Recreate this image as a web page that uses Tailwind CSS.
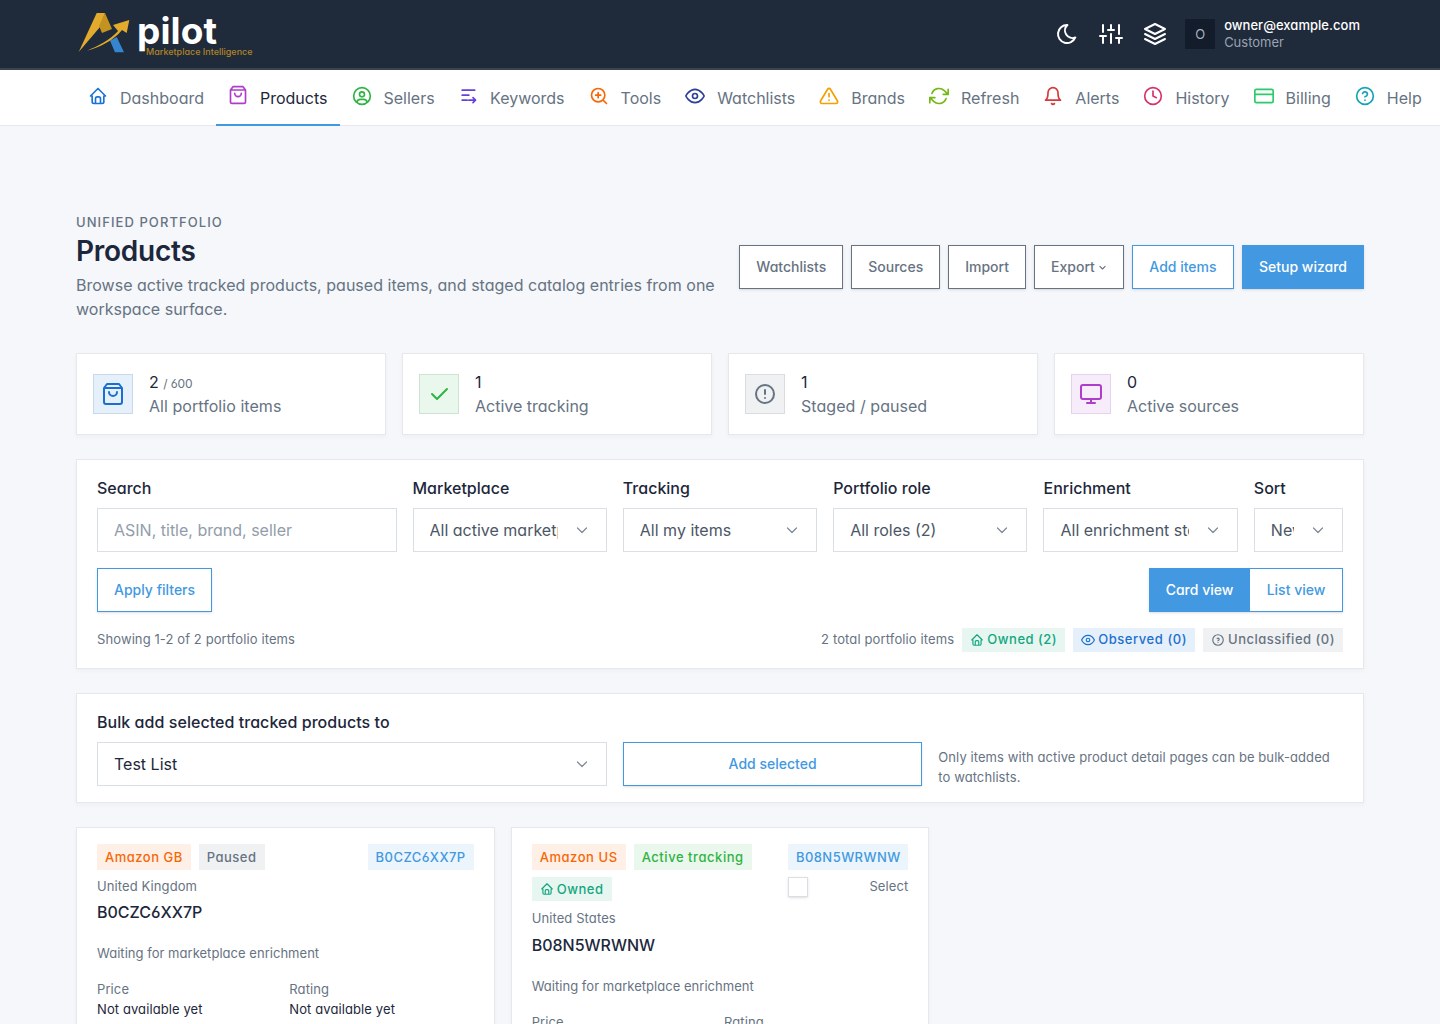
<!DOCTYPE html>
<html lang="en">
<head>
  <meta charset="UTF-8">
  <meta name="viewport" content="width=device-width, initial-scale=1.0">
  <title>Products - pilot</title>
  <script src="https://cdn.jsdelivr.net/npm/@tailwindcss/browser@4"></script>
</head>
<body class="font-['Inter',sans-serif] [font-feature-settings:'cv03','cv04','cv11'] bg-[#f5f7fb] text-[#1d273b] text-sm">
<div class="h-[1024px] overflow-hidden">

  <!-- top bar -->
  <header class="h-[70px] bg-[#1f2a3b] border-b-2 border-[#3a4350] flex items-center justify-between pl-[78px] pr-[80px]">
    <div class="flex items-start">
      <svg class="w-[54px] h-[42px] mt-[1px]" viewBox="0 0 54 42">
        <polygon points="0.7,40 18.7,1 27,1 22,15" fill="#e3ab2d"/>
        <polygon points="27,1 34,17 24,21 21,14" fill="#c4921f"/>
        <polygon points="32,28.7 38.7,25 46,40.3 37,40.3" fill="#3585d0"/>
        <path d="M9 38.7C20 34 32 28 40 19L35 13L51.3 8L48.7 21L44 18C35 29 22 35 9 38.7Z" fill="#e3ab2d"/>
      </svg>
      <div class="ml-[5px] flex flex-col">
        <span class="mt-[1px] text-[37px] leading-[38px] font-bold text-white tracking-[0.1px]">pilot</span>
        <span class="ml-[9px] mt-[-4px] text-[9px] leading-[12px] font-medium text-[#b08428] whitespace-nowrap">Marketplace Intelligence</span>
      </div>
    </div>
    <div class="flex items-center">
      <svg class="w-6 h-6 text-white" viewBox="0 0 24 24" fill="none" stroke="currentColor" stroke-width="2" stroke-linecap="round" stroke-linejoin="round"><path d="M12 3c.132 0 .263 0 .393 0a7.5 7.5 0 0 0 7.92 12.446a9 9 0 1 1 -8.313 -12.454z"/></svg>
      <svg class="w-6 h-6 ml-[20px] text-white" viewBox="0 0 24 24" fill="none" stroke="currentColor" stroke-width="2" stroke-linecap="round" stroke-linejoin="round"><path d="M4 21v-7M4 10V3M12 21v-9M12 8V3M20 21v-5M20 12V3M1 14h6M9 8h6M17 16h6"/></svg>
      <svg class="w-6 h-6 ml-[20px] text-white" viewBox="0 0 24 24" fill="none" stroke="currentColor" stroke-width="2" stroke-linecap="round" stroke-linejoin="round"><path d="M12 2 2 7l10 5 10-5-10-5ZM2 17l10 5 10-5M2 12l10 5 10-5"/></svg>
      <div class="ml-[18px] w-[30px] h-[30px] bg-[#131c2b] text-[#a8b0bb] text-[13px] flex items-center justify-center">O</div>
      <div class="ml-[9px] leading-[17px] text-[13px]">
        <div class="text-white font-medium tracking-[0.03px]">owner@example.com</div>
        <div class="text-[#9aa4b2]">Customer</div>
      </div>
    </div>
  </header>

  <!-- main nav -->
  <nav class="h-[56px] bg-white border-b border-[#e6e8eb] flex pl-[76px] text-base text-[#667382] whitespace-nowrap">
    <a class="flex items-center px-3 gap-3 shrink-0 h-[56px]">
      <svg class="w-5 h-5 text-[#1b74d4] mt-[-4px]" viewBox="0 0 24 24" fill="none" stroke="currentColor" stroke-width="2" stroke-linecap="round" stroke-linejoin="round"><path d="M5 12H3l9-9 9 9h-2M5 12v7a2 2 0 0 0 2 2h10a2 2 0 0 0 2-2v-7M9 21v-6a2 2 0 0 1 2-2h2a2 2 0 0 1 2 2v6"/></svg>Dashboard</a>
    <a class="flex items-center px-3 pt-[2px] gap-3 shrink-0 h-[56px] text-[#1d273b] border-b-2 border-[#4299e1]">
      <svg class="w-5 h-5 text-[#ae3ec9] mt-[-6px]" viewBox="0 0 24 24" fill="none" stroke="currentColor" stroke-width="2" stroke-linecap="round" stroke-linejoin="round"><path d="M6 2 3 6v14a2 2 0 0 0 2 2h14a2 2 0 0 0 2-2V6l-3-4ZM3 6h18M16 10a4 4 0 0 1-8 0"/></svg>Products</a>
    <a class="flex items-center pl-3 pr-[11.4px] gap-3 shrink-0 h-[56px]">
      <svg class="w-5 h-5 text-[#2fb344] mt-[-4px]" viewBox="0 0 24 24" fill="none" stroke="currentColor" stroke-width="2" stroke-linecap="round" stroke-linejoin="round"><path d="M2 12a10 10 0 1 0 20 0a10 10 0 1 0-20 0M9 10a3 3 0 1 0 6 0a3 3 0 1 0-6 0M6 19.5a4 4 0 0 1 4-3.5h4a4 4 0 0 1 4 3.5"/></svg>Sellers</a>
    <a class="flex items-center px-3 gap-3 shrink-0 h-[56px]">
      <svg class="w-5 h-5 text-[#6741d9] mt-[-4px]" viewBox="0 0 24 24" fill="none" stroke="currentColor" stroke-width="2" stroke-linecap="round" stroke-linejoin="round"><path d="M5 5h15M5 11h8M5 17h6M13 17h8M18 14l3 3-3 3"/></svg>Keywords</a>
    <a class="flex items-center px-3 gap-3 shrink-0 h-[56px]">
      <svg class="w-5 h-5 text-[#f76707] mt-[-4px]" viewBox="0 0 24 24" fill="none" stroke="currentColor" stroke-width="2" stroke-linecap="round" stroke-linejoin="round"><path d="M3 11a8 8 0 1 0 16 0a8 8 0 1 0-16 0M21 21l-4.35-4.35M11 8v6M8 11h6"/></svg>Tools</a>
    <a class="flex items-center px-3 gap-3 shrink-0 h-[56px]">
      <svg class="w-5 h-5 text-[#2d3f97] mt-[-4px]" viewBox="0 0 24 24" fill="none" stroke="currentColor" stroke-width="2" stroke-linecap="round" stroke-linejoin="round"><path d="M1 12s4-8 11-8 11 8 11 8-4 8-11 8-11-8-11-8zM9 12a3 3 0 1 0 6 0a3 3 0 1 0-6 0"/></svg>Watchlists</a>
    <a class="flex items-center px-3 gap-3 shrink-0 h-[56px]">
      <svg class="w-5 h-5 text-[#f59f00] mt-[-4px]" viewBox="0 0 24 24" fill="none" stroke="currentColor" stroke-width="2" stroke-linecap="round" stroke-linejoin="round"><path d="M10.29 3.86L1.82 18a2 2 0 0 0 1.71 3h16.94a2 2 0 0 0 1.71-3L13.71 3.86a2 2 0 0 0-3.42 0zM12 9v4M12 17h.01"/></svg>Brands</a>
    <a class="flex items-center px-3 gap-3 shrink-0 h-[56px]">
      <svg class="w-5 h-5 text-[#74b816] mt-[-4px]" viewBox="0 0 24 24" fill="none" stroke="currentColor" stroke-width="2" stroke-linecap="round" stroke-linejoin="round"><path d="M23 4v6h-6M1 20v-6h6M3.51 9a9 9 0 0 1 14.85-3.36L23 10M1 14l4.64 4.36A9 9 0 0 0 20.49 15"/></svg>Refresh</a>
    <a class="flex items-center px-3 gap-3 shrink-0 h-[56px]">
      <svg class="w-5 h-5 text-[#d63939] mt-[-4px]" viewBox="0 0 24 24" fill="none" stroke="currentColor" stroke-width="2" stroke-linecap="round" stroke-linejoin="round"><path d="M18 8A6 6 0 0 0 6 8c0 7-3 9-3 9h18s-3-2-3-9M13.73 21a2 2 0 0 1-3.46 0"/></svg>Alerts</a>
    <a class="flex items-center px-3 gap-3 shrink-0 h-[56px]">
      <svg class="w-5 h-5 text-[#d6336c] mt-[-4px]" viewBox="0 0 24 24" fill="none" stroke="currentColor" stroke-width="2" stroke-linecap="round" stroke-linejoin="round"><path d="M2 12a10 10 0 1 0 20 0a10 10 0 1 0-20 0M12 6v6l4 2"/></svg>History</a>
    <a class="flex items-center px-3 gap-3 shrink-0 h-[56px]">
      <svg class="w-5 h-5 text-[#2bcb6b] mt-[-4px]" viewBox="0 0 24 24" fill="none" stroke="currentColor" stroke-width="2" stroke-linecap="round" stroke-linejoin="round"><path d="M3 4h18a2 2 0 0 1 2 2v12a2 2 0 0 1-2 2H3a2 2 0 0 1-2-2V6a2 2 0 0 1 2-2ZM1 10h22"/></svg>Billing</a>
    <a class="flex items-center px-3 gap-3 shrink-0 h-[56px]">
      <svg class="w-5 h-5 text-[#17a2b8] mt-[-4px]" viewBox="0 0 24 24" fill="none" stroke="currentColor" stroke-width="2" stroke-linecap="round" stroke-linejoin="round"><path d="M2 12a10 10 0 1 0 20 0a10 10 0 1 0-20 0M9.09 9a3 3 0 0 1 5.83 1c0 2-3 3-3 3M12 17h.01"/></svg>Help</a>
  </nav>

  <main class="px-[76px]">
    <!-- page title -->
    <div class="pt-[87px] flex justify-between items-center">
      <div class="w-[650px]">
        <div class="text-[13px] leading-[18px] font-medium tracking-[1.07px] text-[#667382]">UNIFIED PORTFOLIO</div>
        <h1 class="text-[28px] leading-[36px] font-semibold tracking-[-0.25px] mt-[2px]">Products</h1>
        <p class="text-base leading-6 tracking-[0.02px] text-[#667382] mt-[4px]">Browse active tracked products, paused items, and staged catalog entries from one workspace surface.</p>
      </div>
      <div class="flex gap-2 font-medium">
        <button class="h-11 px-4 bg-white border border-[#667382] text-[#667382] shadow-sm">Watchlists</button>
        <button class="h-11 px-4 bg-white border border-[#667382] text-[#667382] shadow-sm">Sources</button>
        <button class="h-11 px-4 bg-white border border-[#667382] text-[#667382] shadow-sm">Import</button>
        <button class="h-11 w-[90px] justify-center bg-white border border-[#667382] text-[#667382] shadow-sm flex items-center gap-[3px]">Export
          <svg class="w-[9px] h-[9px]" viewBox="0 0 24 24" fill="none" stroke="currentColor" stroke-width="3" stroke-linecap="round" stroke-linejoin="round"><path d="M5 9l7 7 7-7"/></svg></button>
        <button class="h-11 w-[102px] bg-white border border-[#4299e1] text-[#4299e1] shadow-sm">Add items</button>
        <button class="h-11 px-4 bg-[#4299e1] border border-[#4299e1] text-white shadow-sm">Setup wizard</button>
      </div>
    </div>

    <!-- stat cards -->
    <div class="grid grid-cols-4 gap-4 mt-[32px]">
      <div class="h-[82px] bg-white border border-[#e6e8eb] shadow-[0_2px_4px_rgba(30,41,59,0.04)] flex items-center pl-4 gap-4">
        <div class="w-10 h-10 flex items-center justify-center bg-[#e6f0fa] border border-[#c8d9ec] text-[#1b6fd0]">
          <svg class="w-6 h-6" viewBox="0 0 24 24" fill="none" stroke="currentColor" stroke-width="2" stroke-linecap="round" stroke-linejoin="round"><path d="M6 2 3 6v14a2 2 0 0 0 2 2h14a2 2 0 0 0 2-2V6l-3-4ZM3 6h18M16 10a4 4 0 0 1-8 0"/></svg>
        </div>
        <div class="text-base leading-6 tracking-[0.05px]"><div>2 <span class="text-xs text-[#667382] tracking-[-0.15px]">/ 600</span></div><div class="text-[#667382]">All portfolio items</div></div>
      </div>
      <div class="h-[82px] bg-white border border-[#e6e8eb] shadow-[0_2px_4px_rgba(30,41,59,0.04)] flex items-center pl-4 gap-4">
        <div class="w-10 h-10 flex items-center justify-center bg-[#eaf7ec] border border-[#cfe3d4] text-[#2fb344]">
          <svg class="w-6 h-6" viewBox="0 0 24 24" fill="none" stroke="currentColor" stroke-width="2" stroke-linecap="round" stroke-linejoin="round"><path d="M5 12l5 5L20 7"/></svg>
        </div>
        <div class="text-base leading-6"><div>1</div><div class="text-[#667382]">Active tracking</div></div>
      </div>
      <div class="h-[82px] bg-white border border-[#e6e8eb] shadow-[0_2px_4px_rgba(30,41,59,0.04)] flex items-center pl-4 gap-4">
        <div class="w-10 h-10 flex items-center justify-center bg-[#f0f1f3] border border-[#d9dce1] text-[#667382]">
          <svg class="w-6 h-6" viewBox="0 0 24 24" fill="none" stroke="currentColor" stroke-width="2" stroke-linecap="round" stroke-linejoin="round"><path d="M3 12a9 9 0 1 0 18 0a9 9 0 0 0-18 0M12 8v4M12 16h.01"/></svg>
        </div>
        <div class="text-base leading-6 tracking-[0.05px]"><div>1</div><div class="text-[#667382]">Staged / paused</div></div>
      </div>
      <div class="h-[82px] bg-white border border-[#e6e8eb] shadow-[0_2px_4px_rgba(30,41,59,0.04)] flex items-center pl-4 gap-4">
        <div class="w-10 h-10 flex items-center justify-center bg-[#f7ecfa] border border-[#e4d3ea] text-[#ae3ec9]">
          <svg class="w-6 h-6" viewBox="0 0 24 24" fill="none" stroke="currentColor" stroke-width="2" stroke-linecap="round" stroke-linejoin="round"><path d="M4 3h16a2 2 0 0 1 2 2v10a2 2 0 0 1-2 2H4a2 2 0 0 1-2-2V5a2 2 0 0 1 2-2ZM8 21h8M12 17v4"/></svg>
        </div>
        <div class="text-base leading-6"><div>0</div><div class="text-[#667382]">Active sources</div></div>
      </div>
    </div>

    <!-- filters -->
    <section class="mt-[24px] h-[210px] bg-white border border-[#e6e8eb] shadow-[0_2px_4px_rgba(30,41,59,0.04)] px-5 pt-4">
      <div class="grid grid-cols-12 gap-4 text-base">
        <label class="col-span-3 block"><span class="block font-medium leading-6 mb-2">Search</span>
          <input class="w-full h-11 px-4 bg-white border border-[#dadfe5] placeholder:text-[#929dab]" placeholder="ASIN, title, brand, seller"></label>
        <label class="col-span-2 block"><span class="block font-medium leading-6 mb-2">Marketplace</span>
          <span class="relative block"><select class="appearance-none w-full h-11 pl-4 pr-12 bg-white border border-[#dadfe5] text-[#4b5666]"><option>All active marketplaces</option></select>
          <svg class="absolute right-[17px] top-[14px] w-4 h-4 text-[#7d8896] pointer-events-none" viewBox="0 0 16 16" fill="none" stroke="currentColor" stroke-width="1.2" stroke-linecap="round" stroke-linejoin="round"><path d="M3.5 6l4.5 4.5 4.5-4.5"/></svg></span></label>
        <label class="col-span-2 block"><span class="block font-medium leading-6 mb-2">Tracking</span>
          <span class="relative block"><select class="appearance-none w-full h-11 pl-4 pr-12 bg-white border border-[#dadfe5] text-[#4b5666]"><option>All my items</option></select>
          <svg class="absolute right-[17px] top-[14px] w-4 h-4 text-[#7d8896] pointer-events-none" viewBox="0 0 16 16" fill="none" stroke="currentColor" stroke-width="1.2" stroke-linecap="round" stroke-linejoin="round"><path d="M3.5 6l4.5 4.5 4.5-4.5"/></svg></span></label>
        <label class="col-span-2 block"><span class="block font-medium leading-6 mb-2">Portfolio role</span>
          <span class="relative block"><select class="appearance-none w-full h-11 pl-4 pr-12 bg-white border border-[#dadfe5] text-[#4b5666]"><option>All roles (2)</option></select>
          <svg class="absolute right-[17px] top-[14px] w-4 h-4 text-[#7d8896] pointer-events-none" viewBox="0 0 16 16" fill="none" stroke="currentColor" stroke-width="1.2" stroke-linecap="round" stroke-linejoin="round"><path d="M3.5 6l4.5 4.5 4.5-4.5"/></svg></span></label>
        <label class="col-span-2 block"><span class="block font-medium leading-6 mb-2">Enrichment</span>
          <span class="relative block"><select class="appearance-none w-full h-11 pl-4 pr-12 bg-white border border-[#dadfe5] text-[#4b5666]"><option>All enrichment states</option></select>
          <svg class="absolute right-[17px] top-[14px] w-4 h-4 text-[#7d8896] pointer-events-none" viewBox="0 0 16 16" fill="none" stroke="currentColor" stroke-width="1.2" stroke-linecap="round" stroke-linejoin="round"><path d="M3.5 6l4.5 4.5 4.5-4.5"/></svg></span></label>
        <label class="col-span-1 block"><span class="block font-medium leading-6 mb-2">Sort</span>
          <span class="relative block"><select class="appearance-none w-full h-11 pl-4 pr-12 bg-white border border-[#dadfe5] text-[#4b5666]"><option>Newest</option></select>
          <svg class="absolute right-[17px] top-[14px] w-4 h-4 text-[#7d8896] pointer-events-none" viewBox="0 0 16 16" fill="none" stroke="currentColor" stroke-width="1.2" stroke-linecap="round" stroke-linejoin="round"><path d="M3.5 6l4.5 4.5 4.5-4.5"/></svg></span></label>
      </div>
      <div class="flex justify-between mt-4 font-medium">
        <button class="h-11 px-4 border border-[#4299e1] text-[#4299e1] shadow-sm">Apply filters</button>
        <div class="flex shadow-sm">
          <button class="h-11 w-[101px] bg-[#4299e1] border border-[#4299e1] text-white">Card view</button>
          <button class="h-11 w-[93px] border border-[#4299e1] border-l-0 text-[#4299e1]">List view</button>
        </div>
      </div>
      <div class="flex justify-between items-center mt-4 text-[13px] tracking-[0.1px] text-[#667382]">
        <span class="mb-[2px]">Showing 1-2 of 2 portfolio items</span>
        <div class="flex items-center gap-2">
          <span class="mb-[2px] tracking-[0.13px]">2 total portfolio items</span>
          <span class="h-6 px-2 pb-[2px] flex items-center gap-[3px] bg-[#e7f6f1] text-[#13a67f] font-medium tracking-[0.5px]">
            <svg class="w-[14px] h-[14px] mt-[2px]" viewBox="0 0 24 24" fill="none" stroke="currentColor" stroke-width="2" stroke-linecap="round" stroke-linejoin="round"><path d="M5 12H3l9-9 9 9h-2M5 12v7a2 2 0 0 0 2 2h10a2 2 0 0 0 2-2v-7M9 21v-6a2 2 0 0 1 2-2h2a2 2 0 0 1 2 2v6"/></svg>Owned (2)</span>
          <span class="h-6 px-2 pb-[2px] flex items-center gap-[3px] bg-[#e6f0fa] text-[#1b6fd0] font-medium tracking-[0.56px]">
            <svg class="w-[14px] h-[14px] mt-[2px]" viewBox="0 0 24 24" fill="none" stroke="currentColor" stroke-width="2" stroke-linecap="round" stroke-linejoin="round"><path d="M1 12s4-8 11-8 11 8 11 8-4 8-11 8-11-8-11-8zM9 12a3 3 0 1 0 6 0a3 3 0 1 0-6 0"/></svg>Observed (0)</span>
          <span class="h-6 px-2 pb-[2px] flex items-center gap-[3px] bg-[#f0f1f3] text-[#667382] font-medium tracking-[0.5px]">
            <svg class="w-[14px] h-[14px] mt-[2px]" viewBox="0 0 24 24" fill="none" stroke="currentColor" stroke-width="2" stroke-linecap="round" stroke-linejoin="round"><path d="M3 12a9 9 0 1 0 18 0a9 9 0 1 0-18 0M12 16v.01M12 13a2 2 0 0 0 .914-3.782a1.98 1.98 0 0 0-2.414.483"/></svg>Unclassified (0)</span>
        </div>
      </div>
    </section>

    <!-- bulk add -->
    <section class="mt-[24px] h-[110px] bg-white border border-[#e6e8eb] shadow-[0_2px_4px_rgba(30,41,59,0.04)] px-5 pt-4">
      <div class="text-base font-medium leading-6 tracking-[0.05px] mb-2">Bulk add selected tracked products to</div>
      <div class="grid grid-cols-12 gap-4 items-start">
        <div class="col-span-5 relative">
          <select class="appearance-none w-full h-11 pl-4 pr-12 bg-white border border-[#dadfe5] text-base"><option>Test List</option></select>
          <svg class="absolute right-[17px] top-[14px] w-4 h-4 text-[#7d8896] pointer-events-none" viewBox="0 0 16 16" fill="none" stroke="currentColor" stroke-width="1.2" stroke-linecap="round" stroke-linejoin="round"><path d="M3.5 6l4.5 4.5 4.5-4.5"/></svg>
        </div>
        <button class="col-span-3 h-11 border border-[#4299e1] text-[#4299e1] font-medium shadow-sm">Add selected</button>
        <p class="col-span-4 mt-[5px] text-[13px] leading-5 tracking-[0.08px] text-[#667382]">Only items with active product detail pages can be bulk-added to watchlists.</p>
      </div>
    </section>

    <!-- product cards -->
    <div class="grid grid-cols-3 gap-4 mt-[24px] items-start">
      <article class="bg-white border border-[#e6e8eb] shadow-[0_2px_4px_rgba(30,41,59,0.04)] px-5 pt-4 pb-5 text-[13px] text-[#667382] tracking-[0.1px]">
        <div class="flex justify-between">
          <div class="flex flex-wrap gap-2 font-medium tracking-[0.5px]">
            <span class="h-[26px] px-2 flex items-center bg-[#fef0e6] text-[#f76707]">Amazon GB</span>
            <span class="h-[26px] px-2 flex items-center bg-[#f0f1f3] text-[#667382]">Paused</span>
          </div>
          <span class="h-[26px] px-2 flex items-center bg-[#ecf5fc] text-[#4299e1] font-medium tracking-[0.45px]">B0CZC6XX7P</span>
        </div>
        <div class="mt-[6px] leading-5">United Kingdom</div>
        <div class="mt-[4px] text-base leading-6 font-medium text-[#1d273b] tracking-normal">B0CZC6XX7P</div>
        <div class="mt-[19px] leading-5 tracking-[0.03px]">Waiting for marketplace enrichment</div>
        <div class="grid grid-cols-2 gap-2 mt-4 leading-5">
          <div>Price<div class="text-[#1d273b]">Not available yet</div></div>
          <div>Rating<div class="text-[#1d273b]">Not available yet</div></div>
        </div>
      </article>
      <article class="bg-white border border-[#e6e8eb] shadow-[0_2px_4px_rgba(30,41,59,0.04)] px-5 pt-4 pb-5 text-[13px] text-[#667382] tracking-[0.1px]">
        <div class="flex justify-between">
          <div class="w-[240px] flex flex-wrap gap-x-2 gap-y-[7px] font-medium tracking-[0.55px]">
            <span class="h-[26px] px-2 flex items-center bg-[#fef0e6] text-[#f76707]">Amazon US</span>
            <span class="h-[26px] px-2 flex items-center bg-[#eaf7ec] text-[#2fb344]">Active tracking</span>
            <span class="h-6 px-2 flex items-center gap-[3px] bg-[#e7f6f1] text-[#13a67f]">
              <svg class="w-[14px] h-[14px]" viewBox="0 0 24 24" fill="none" stroke="currentColor" stroke-width="2" stroke-linecap="round" stroke-linejoin="round"><path d="M5 12H3l9-9 9 9h-2M5 12v7a2 2 0 0 0 2 2h10a2 2 0 0 0 2-2v-7M9 21v-6a2 2 0 0 1 2-2h2a2 2 0 0 1 2 2v6"/></svg>Owned</span>
          </div>
          <div class="w-[120px]">
            <span class="h-[26px] px-2 flex items-center justify-center bg-[#ecf5fc] text-[#4299e1] font-medium tracking-[0.45px]">B08N5WRWNW</span>
            <div class="flex items-start justify-between mt-[7px]">
              <span class="w-5 h-5 bg-white border border-[#dadfe5] shadow-sm"></span>
              <span class="leading-5 mt-[-1px]">Select</span>
            </div>
          </div>
        </div>
        <div class="mt-[7px] leading-5">United States</div>
        <div class="mt-[5px] text-base leading-6 font-medium text-[#1d273b] tracking-normal">B08N5WRWNW</div>
        <div class="mt-[19px] leading-5 tracking-[0.03px]">Waiting for marketplace enrichment</div>
        <div class="grid grid-cols-2 gap-2 mt-4 leading-5">
          <div>Price<div class="text-[#1d273b]">Not available yet</div></div>
          <div>Rating<div class="text-[#1d273b]">Not available yet</div></div>
        </div>
      </article>
    </div>
  </main>
</div>
</body>
</html>
